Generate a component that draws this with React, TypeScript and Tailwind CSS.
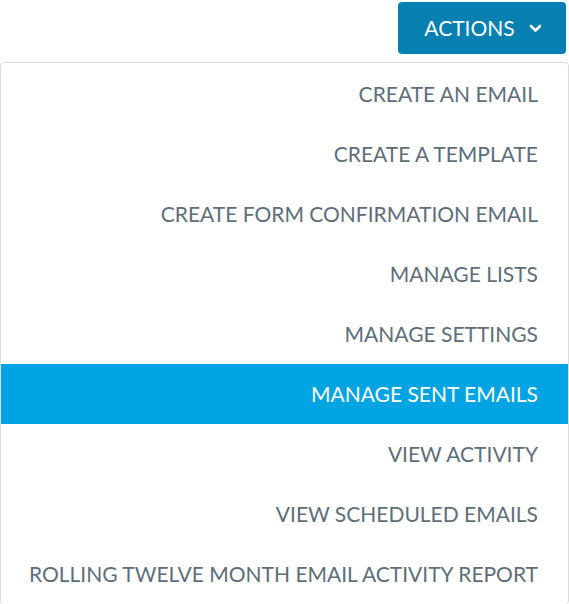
import React from 'react';

const items = [
  'CREATE AN EMAIL',
  'CREATE A TEMPLATE',
  'CREATE FORM CONFIRMATION EMAIL',
  'MANAGE LISTS',
  'MANAGE SETTINGS',
  'MANAGE SENT EMAILS',
  'VIEW ACTIVITY',
  'VIEW SCHEDULED EMAILS',
  'ROLLING TWELVE MONTH EMAIL ACTIVITY REPORT',
];

const App: React.FC = () => {
  const active = 5;

  return (
    <div className="w-[569px] h-[604px] overflow-hidden bg-white font-['Lato','Noto_Sans',sans-serif]">
      <div className="flex justify-end pt-[2px] pr-[3px]">
        <button className="flex items-center gap-[14px] h-[52px] w-[168px] justify-center pl-[2px] rounded-[4px] bg-[#0580b1] text-white text-[21px]">
          ACTIONS
          <svg width="13" height="9" viewBox="0 0 13 9" fill="none" stroke="currentColor" strokeWidth="2.6" strokeLinecap="round" strokeLinejoin="round">
            <path d="M2 2l4.5 4.5L11 2" />
          </svg>
        </button>
      </div>
      <div className="mt-[8px] border border-[#dcdcdc] rounded-[4px] pt-px">
        {items.map((item, index) => (
          <div
            key={index}
            className={
              index === active
                ? 'h-[60px] flex items-center justify-end pr-[30px] text-[21px] bg-[#01a4e2] text-white'
                : 'h-[60px] flex items-center justify-end pr-[30px] text-[21px] text-[#5e6e79]'
            }
          >
            {item}
          </div>
        ))}
      </div>
    </div>
  );
};

export default App;
